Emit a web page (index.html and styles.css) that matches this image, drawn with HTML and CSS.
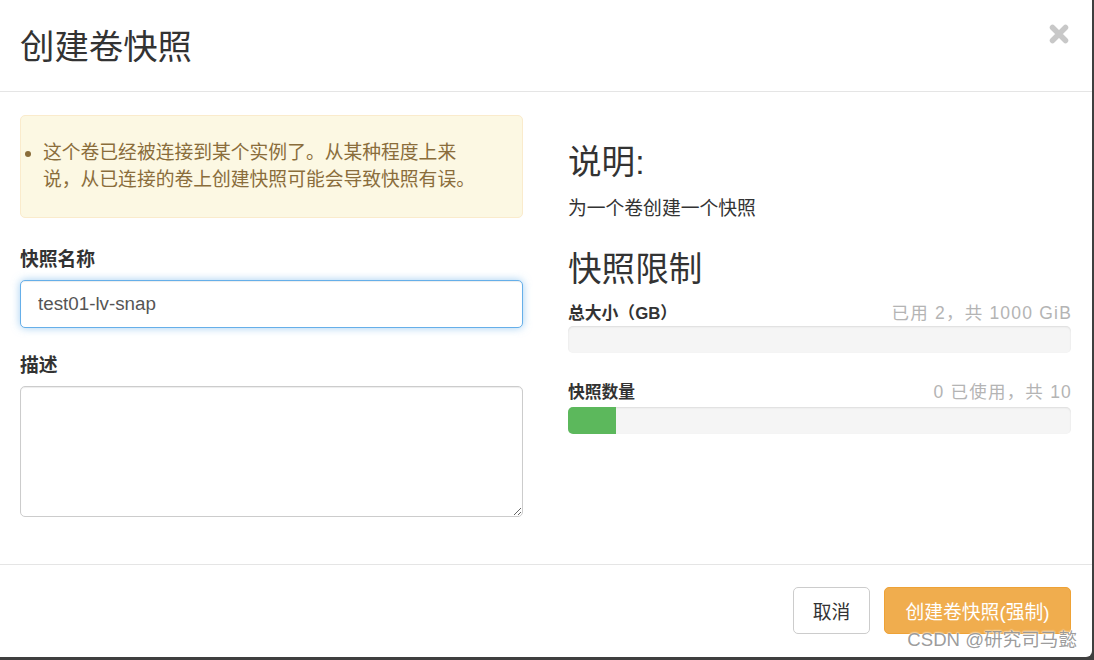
FILE: index.html
```html
<!DOCTYPE html>
<html lang="zh-CN">
<head>
    <meta charset="UTF-8">
    <title>创建卷快照</title>
    <link rel="stylesheet" href="styles.css">
</head>
<body>
<div class="modal">
    <div class="modal-header">
        <h3 class="modal-title">创建卷快照</h3>
        <span class="close">
            <svg width="20" height="20" viewBox="0 0 20 20"><path d="M3.5 3.5L16.5 16.5M16.5 3.5L3.5 16.5" stroke="#c8c8c8" stroke-width="5.5" stroke-linecap="round"/></svg>
        </span>
    </div>
    <div class="modal-body">
        <div class="left">
            <div class="alert">
                <ul>
                    <li>这个卷已经被连接到某个实例了。从某种程度上来说，从已连接的卷上创建快照可能会导致快照有误。</li>
                </ul>
            </div>
            <div class="form-group">
                <label>快照名称</label>
                <input class="input focus" type="text" value="test01-lv-snap">
            </div>
            <div class="form-group">
                <label>描述</label>
                <textarea class="input area"></textarea>
            </div>
        </div>
        <div class="right">
            <h3 class="title first">说明:</h3>
            <p class="desc">为一个卷创建一个快照</p>
            <h3 class="title">快照限制</h3>
            <div class="quota-row">
                <strong>总大小（GB）</strong>
                <span class="used">已用 2，共 1000 GiB</span>
            </div>
            <div class="progress"><div class="bar" style="width: 0%"></div></div>
            <div class="quota-row second">
                <strong>快照数量</strong>
                <span class="used">0 已使用，共 10</span>
            </div>
            <div class="progress"><div class="bar" style="width: 48px"></div></div>
        </div>
    </div>
    <div class="modal-footer">
        <button class="btn btn-cancel">取消</button>
        <button class="btn btn-warning">创建卷快照(强制)</button>
    </div>
    <div class="watermark">CSDN @研究司马懿</div>
</div>
</body>
</html>
```

FILE: styles.css
```css
*{
    margin: 0;
    padding: 0;
    box-sizing: border-box;
}
body{
    background: #3f3f3f;
    font-family: "Liberation Sans", "Noto Sans CJK SC", sans-serif;
    font-size: 18.8px;
    color: #333333;
}
.modal{
    width: 1092px;
    height: 657px;
    background: #FFFFFF;
    border-radius: 0 0 6px 0;
    display: flex;
    flex-direction: column;
    position: relative;
}
.modal-header{
    height: 92px;
    border-bottom: 1px solid #e5e5e5;
    display: flex;
    justify-content: space-between;
    padding: 0 23px 0 20px;
}
.modal-title{
    align-self: center;
    font-size: 34.4px;
    font-weight: normal;
    line-height: 38px;
    margin-top: 2px;
}
.close{
    margin-top: 24px;
    width: 20px;
    height: 20px;
}
.modal-body{
    flex: 1;
    display: flex;
    gap: 45px;
    padding: 23px 21px 0 20px;
}
.left, .right{
    width: 503px;
}
.alert{
    background: #fcf8e3;
    border: 1px solid #faebcc;
    border-radius: 5px;
    color: #8a6d3b;
    padding: 23px 40px 24px 0;
    line-height: 27px;
    margin-bottom: 28px;
}
.alert ul{
    padding-left: 22px;
}
.form-group{
    margin-bottom: 24px;
}
.form-group label{
    display: block;
    font-weight: bold;
    line-height: 27px;
    margin-bottom: 7px;
}
.input{
    display: block;
    width: 503px;
    border: 1px solid #cccccc;
    border-radius: 5px;
    font-family: inherit;
    font-size: 18.8px;
    color: #555555;
    outline: none;
    box-shadow: inset 0 1px 1px rgba(0,0,0,.075);
}
.focus{
    height: 48px;
    padding: 0 17px;
    border-color: #66afe9;
    box-shadow: inset 0 1px 1px rgba(0,0,0,.075), 0 0 8px rgba(102,175,233,.6);
}
.area{
    height: 131px;
}
.title{
    font-size: 33.6px;
    font-weight: normal;
    line-height: 37px;
    margin-top: 29px;
}
.title.first{
    margin-top: 29px;
}
.desc{
    line-height: 27px;
    margin-top: 14px;
}
.quota-row{
    display: flex;
    justify-content: space-between;
    align-items: baseline;
    font-size: 16.8px;
    line-height: 24px;
    margin-top: 13px;
    margin-bottom: 0;
}
.quota-row.second{
    margin-top: 27px;
    margin-bottom: 2px;
}
.used{
    color: #b4b4b4;
    font-size: 17.5px;
    letter-spacing: 1.2px;
    margin-right: -1px;
}
.progress{
    height: 27px;
    background: #f5f5f5;
    border-radius: 5px;
    overflow: hidden;
    box-shadow: inset 0 1px 2px rgba(0,0,0,.1);
}
.bar{
    height: 100%;
    background: #5cb85c;
}
.modal-footer{
    height: 93px;
    border-top: 1px solid #e5e5e5;
    display: flex;
    justify-content: flex-end;
    align-items: center;
    gap: 14px;
    padding: 0 21px;
}
.btn{
    height: 47px;
    border: 1px solid #cccccc;
    border-radius: 5px;
    background: #FFFFFF;
    font-family: inherit;
    font-size: 18.8px;
    color: #333333;
    margin-top: -1px;
}
.btn-cancel{
    width: 77px;
}
.btn-warning{
    width: 187px;
    background: #f0ad4e;
    border-color: #eea236;
    color: #FFFFFF;
}
.watermark{
    position: absolute;
    right: 15px;
    bottom: 6px;
    font-size: 18.6px;
    color: rgba(130,130,130,.8);
    text-shadow: 0 0 2px #FFFFFF, 0 0 2px #FFFFFF;
}
```
